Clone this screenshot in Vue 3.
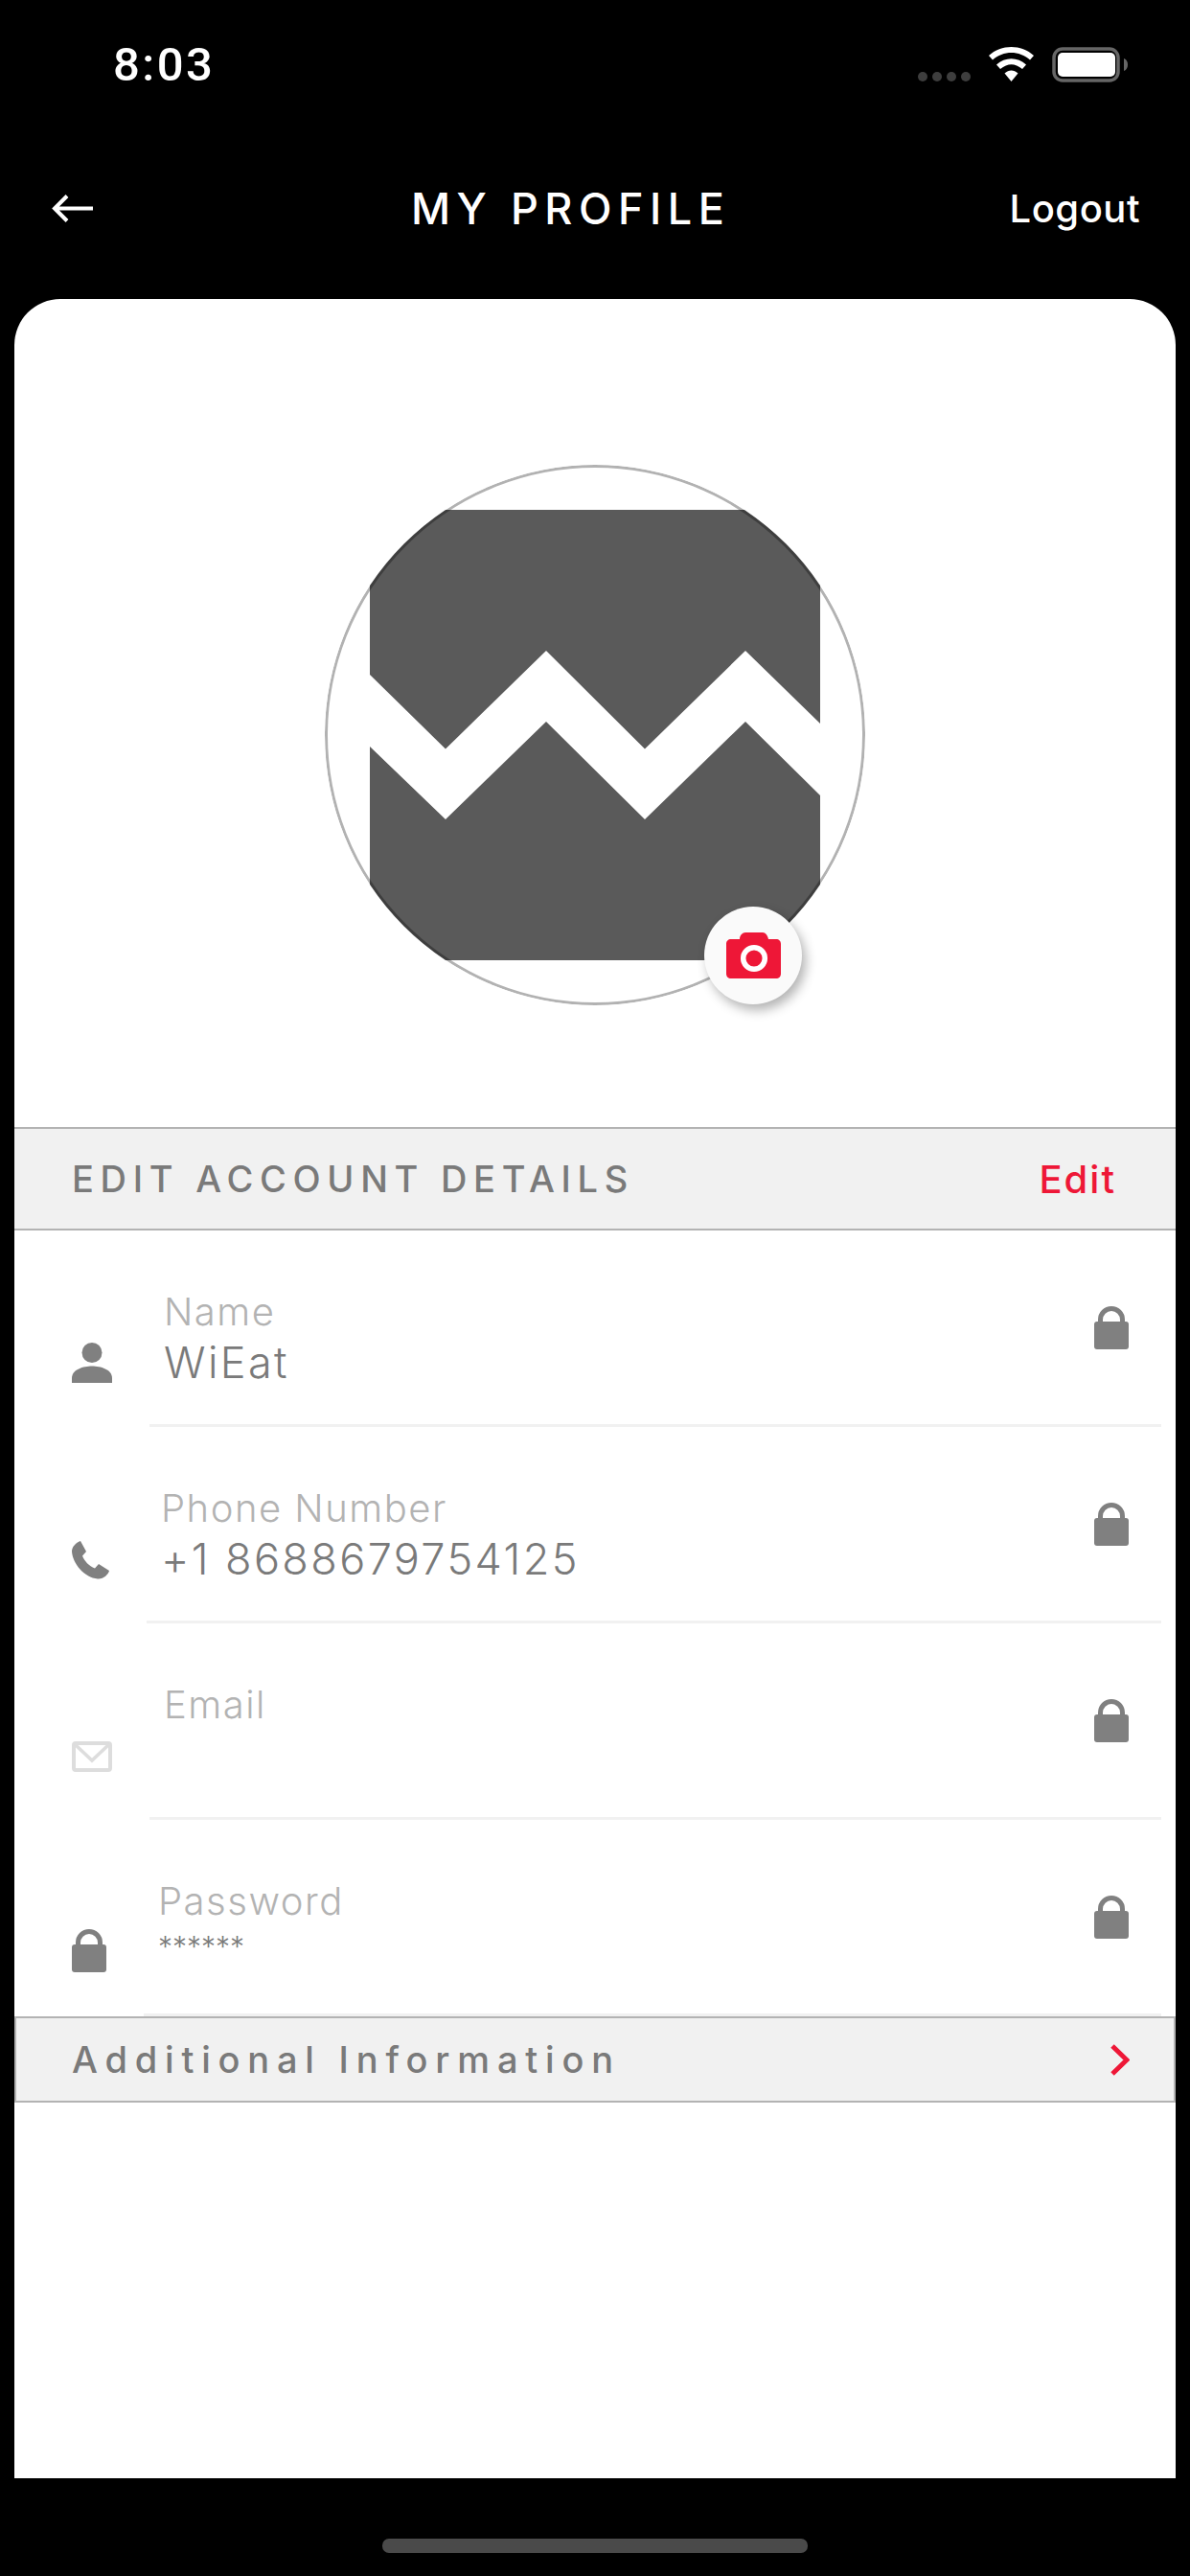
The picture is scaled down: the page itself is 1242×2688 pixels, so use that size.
<script setup>
const fields = [
  { icon: 'person', label: 'Name', value: 'WiEat' },
  { icon: 'phone', label: 'Phone Number', value: '+1 8688679754125' },
  { icon: 'mail', label: 'Email', value: '' },
  { icon: 'lock', label: 'Password', value: '******', masked: true },
];
</script>

<template>
  <div class="screen">
    <div class="status-bar">
      <span class="clock">8:03</span>
      <div class="status-icons">
        <div class="signal"><i></i><i></i><i></i><i></i></div>
        <svg class="wifi" width="47" height="36" viewBox="0 0 47 36" fill="#fff">
          <path d="M0 9C13-3 34-3 47 9L43 13.5C32 3.500 15 3.500 4 13.500Z" />
          <path d="M8 18.500C17 10 30 10 39 18.500L35 23C27 16.500 20 16.500 12 23Z" />
          <path d="M16.500 27.500C21 23.500 26 23.500 30.500 27.500L23.500 36Z" />
        </svg>
        <svg class="battery" width="79" height="37" viewBox="0 0 79 37">
          <rect x="2" y="2" width="67" height="33" rx="9" fill="none" stroke="#666" stroke-width="3.5" />
          <rect x="6" y="6" width="60" height="25" rx="5" fill="#fff" />
          <path d="M75 12c3 1 4 4 4 6.500s-1 5.500-4 6.500Z" fill="#666" />
        </svg>
      </div>
    </div>

    <header class="nav">
      <svg class="back" width="43" height="29" viewBox="0 0 43 29" fill="none" stroke="#fff" stroke-width="4">
        <path d="M43 14.500H4M16 1.500L3 14.500L16 27.500" />
      </svg>
      <h1 class="title">MY PROFILE</h1>
      <span class="logout">Logout</span>
    </header>

    <main class="card">
      <div class="avatar-wrap">
        <div class="avatar">
          <svg class="avatar-img" width="470" height="470" viewBox="0 0 470 470">
            <rect width="470" height="470" fill="#5a5a5a" />
            <path d="M0 172L79 249.500L184 147L287 249.500L392 147L470 223V298L392 221L287 323L184 221L79 323L0 247Z" fill="#fff" />
          </svg>
        </div>
        <button class="camera">
          <svg width="57" height="48" viewBox="0 0 57 48">
            <path d="M5 7H14C14 3 17 0 20 0H38C41 0 43 3 44 7H52C55 7 57 9 57 12V43C57 46 55 48 52 48H5C2 48 0 46 0 43V12C0 9 2 7 5 7Z" fill="#ee1737" />
            <circle cx="29" cy="27" r="11.300" fill="none" stroke="#fff" stroke-width="5.500" />
          </svg>
        </button>
      </div>

      <div class="section-head">
        <span class="section-title">EDIT ACCOUNT DETAILS</span>
        <span class="edit">Edit</span>
      </div>

      <div v-for="f in fields" :key="f.label" class="row">
        <svg v-if="f.icon === 'person'" class="row-icon" width="42" height="42" viewBox="0 0 42 42" fill="#808080">
          <circle cx="21" cy="10.500" r="10.500" />
          <path d="M0 42V37C0 28 12 24.500 21 24.500S42 28 42 37V42Z" />
        </svg>
        <svg v-else-if="f.icon === 'phone'" class="row-icon" width="39" height="40" viewBox="0 0 39 40" fill="#808080">
          <path d="M9 0L15 11L11 15.500C13 21 18 26 24 28.500L28 24L39 31C38 35 33 40 27 39.500C13 38 1 24 0 11C0 6 4 2 9 0Z" />
        </svg>
        <svg v-else-if="f.icon === 'mail'" class="row-icon mail" width="42" height="32" viewBox="0 0 42 32" fill="none" stroke="#ddd">
          <rect x="2" y="2" width="38" height="28" rx="2" stroke-width="4" />
          <path d="M3 3L21 20L39 3" stroke-width="3.500" />
        </svg>
        <svg v-else class="row-icon" width="36" height="45" viewBox="0 0 36 45">
          <path d="M6.500 18V14A11.500 11.500 0 0 1 29.500 14V18" fill="none" stroke="#808080" stroke-width="5" />
          <rect y="16" width="36" height="29" rx="3" fill="#808080" />
        </svg>

        <div class="field">
          <div class="field-text">
            <div class="field-label">{{ f.label }}</div>
            <div class="field-value" :class="{ masked: f.masked }">{{ f.value }}</div>
          </div>
          <svg width="36" height="45" viewBox="0 0 36 45">
            <path d="M6.500 18V14A11.500 11.500 0 0 1 29.500 14V18" fill="none" stroke="#808080" stroke-width="5" />
            <rect y="16" width="36" height="29" rx="3" fill="#808080" />
          </svg>
        </div>
      </div>

      <div class="section-head more">
        <span class="more-title">Additional Information</span>
        <svg width="20" height="33" viewBox="0 0 20 33" fill="none" stroke="#ee1737" stroke-width="5">
          <path d="M2 2L17 16.500L2 31" />
        </svg>
      </div>
    </main>

    <div class="home-bar"></div>
  </div>
</template>

<style>
html, body { background: #000; }
</style>

<style scoped>
.screen {
  width: 1242px;
  height: 2688px;
  background: #000;
  overflow: hidden;
  font-family: Inter, "Liberation Sans", sans-serif;
}

.status-bar {
  height: 122px;
  padding: 45px 65px 0 118px;
  box-sizing: border-box;
  display: flex;
  justify-content: space-between;
  align-items: flex-start;
}
.clock {
  color: #fff;
  font-size: 49px;
  line-height: 46px;
  font-weight: 500;
  letter-spacing: 2.500px;
  font-family: Roboto, sans-serif;
}
.status-icons { display: flex; align-items: flex-start; padding-top: 4px; }
.signal { display: flex; gap: 5px; margin-top: 26px; margin-right: 19px; }
.signal i { width: 10px; height: 10px; border-radius: 50%; background: #3e3e3e; }
.battery { margin-left: 19px; }

.nav {
  height: 190px;
  padding: 0 52px 0 54px;
  display: flex;
  align-items: center;
  color: #fff;
}
.back { margin-right: 332px; }
.title {
  margin: 0;
  font-size: 45px;
  font-weight: 500;
  letter-spacing: 6.500px;
  white-space: nowrap;
}
.logout { margin-left: auto; font-size: 40px; font-weight: 500; letter-spacing: 0.500px; }

.card {
  margin: 0 15px;
  height: 2274px;
  background: #fff;
  border-radius: 48px 48px 0 0;
}

.avatar-wrap {
  position: relative;
  width: 564px;
  margin: 0 auto;
  padding: 173px 0 127px;
}
.avatar {
  position: relative;
  width: 564px;
  height: 564px;
  border-radius: 50%;
  overflow: hidden;
  display: flex;
  align-items: center;
  justify-content: center;
}
.avatar::after {
  content: "";
  position: absolute;
  inset: 0;
  border-radius: 50%;
  border: 3px solid rgba(0, 0, 0, 0.3);
}
.camera {
  position: absolute;
  left: 396px;
  top: 634px;
  width: 102px;
  height: 102px;
  padding: 0;
  border: 0;
  border-radius: 50%;
  background: #fafafa;
  box-shadow: 4px 6px 12px rgba(0, 0, 0, 0.3);
  display: flex;
  align-items: center;
  justify-content: center;
}

.section-head {
  height: 108px;
  box-sizing: border-box;
  padding: 0 62px 0 60px;
  display: flex;
  align-items: center;
  justify-content: space-between;
  background: #f1f1f1;
  border-top: 2px solid #b3b3b3;
  border-bottom: 2px solid #b3b3b3;
}
.section-title {
  color: #7a7a7a;
  font-size: 38px;
  font-weight: 500;
  letter-spacing: 6.700px;
}
.edit { color: #ee1737; font-size: 40px; font-weight: 500; letter-spacing: 2px; }

.row { display: flex; align-items: flex-end; padding: 0 15px 0 60px; }
.row-icon { flex: none; margin-bottom: 46px; }
.row-icon.mail { margin-bottom: 50px; }
.field {
  flex: 1;
  height: 205px;
  box-sizing: border-box;
  margin-left: 39px;
  padding: 0 34px 0 15px;
  display: flex;
  align-items: center;
  justify-content: space-between;
  border-bottom: 3px solid #f1f1f1;
}
.field-text { align-self: flex-start; padding-top: 62px; }
.field-label {
  color: #b3b3b3;
  font-size: 40px;
  line-height: 46px;
  font-weight: 300;
  letter-spacing: 1.500px;
}
.field-value {
  color: #7a7a7a;
  font-size: 45px;
  line-height: 50px;
  margin-top: 5px;
  font-weight: 300;
  letter-spacing: 2.400px;
  min-height: 50px;
}
.field-value.masked { font-size: 30px; line-height: 30px; margin-top: 9px; letter-spacing: 0; }

.section-head.more {
  height: 90px;
  padding: 0 46px 0 58px;
  border: 2px solid #b3b3b3;
}
.more-title {
  color: #7a7a7a;
  font-size: 38px;
  font-weight: 500;
  letter-spacing: 7.800px;
}

.home-bar {
  width: 444px;
  height: 15px;
  margin: 63px auto 0;
  border-radius: 7px;
  background: #4a4a4a;
}
</style>
